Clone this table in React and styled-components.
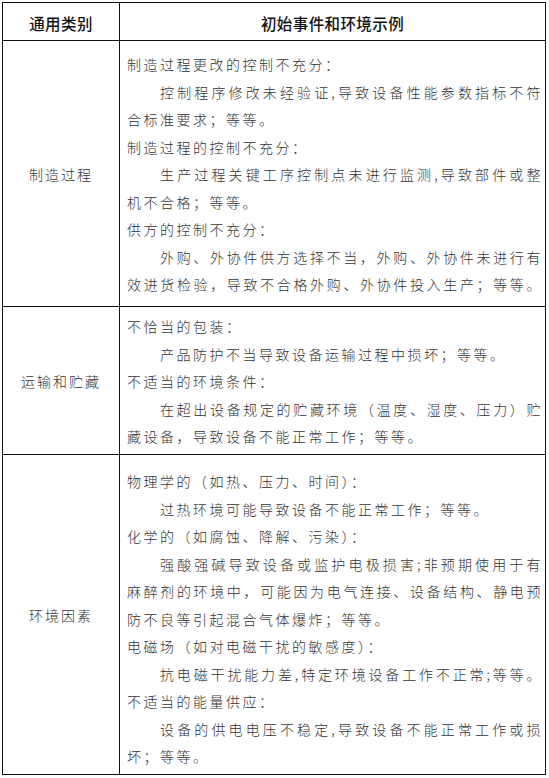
import styled, { createGlobalStyle } from "styled-components"

const GlobalStyle = createGlobalStyle`
  html, body {
    margin: 0;
    padding: 0;
    background: #fff;
  }
  body {
    font-family: "Noto Sans CJK SC", "Noto Sans", sans-serif;
  }
`

const Page = styled.div`
  padding: 2px 0 0 2px;
`

const Table = styled.div`
  display: grid;
  grid-template-columns: 117px 426px;
  width: max-content;
  border-top: 1px solid #111;
  border-left: 1px solid #111;
`

const Cell = styled.div`
  box-sizing: border-box;
  border-right: 1px solid #111;
  border-bottom: 1px solid #111;
  height: ${(p) => p.$h}px;
`

const HeadCell = styled(Cell)`
  display: flex;
  align-items: center;
  justify-content: center;
  padding-top: 3px;
  font-size: 15.5px;
  font-weight: 500;
  letter-spacing: 0.4px;
  color: #111;
`

const LabelCell = styled(Cell)`
  display: flex;
  align-items: center;
  justify-content: center;
  font-size: 14px;
  font-weight: 300;
  letter-spacing: 2px;
  color: #333;
`

const BodyCell = styled(Cell)`
  padding: ${(p) => p.$pt}px 2px 0 7px;
  font-size: 14px;
  font-weight: 300;
  letter-spacing: 2.5px;
  color: #333;
`

const Line = styled.div`
  line-height: 27.5px;
  padding-left: ${(p) => (p.$indent ? 33 : 0)}px;
  text-align: ${(p) => (p.$full ? "justify" : "left")};
  text-align-last: ${(p) => (p.$full ? "justify" : "auto")};
`

const rows = [
  {
    label: "制造过程",
    h: 266,
    pt: 10,
    lines: [
      ["制造过程更改的控制不充分："],
      ["控制程序修改未经验证,导致设备性能参数指标不符", 1, 1],
      ["合标准要求；等等。"],
      ["制造过程的控制不充分："],
      ["生产过程关键工序控制点未进行监测,导致部件或整", 1, 1],
      ["机不合格；等等。"],
      ["供方的控制不充分："],
      ["外购、外协件供方选择不当，外购、外协件未进行有", 1, 1],
      ["效进货检验，导致不合格外购、外协件投入生产；等等。", 0, 1],
    ],
  },
  {
    label: "运输和贮藏",
    h: 148,
    pt: 6,
    lines: [
      ["不恰当的包装："],
      ["产品防护不当导致设备运输过程中损坏；等等。", 1],
      ["不适当的环境条件："],
      ["在超出设备规定的贮藏环境（温度、湿度、压力）贮", 1, 1],
      ["藏设备，导致设备不能正常工作；等等。"],
    ],
  },
  {
    label: "环境因素",
    h: 320,
    pt: 13,
    lines: [
      ["物理学的（如热、压力、时间）："],
      ["过热环境可能导致设备不能正常工作；等等。", 1],
      ["化学的（如腐蚀、降解、污染）："],
      ["强酸强碱导致设备或监护电极损害;非预期使用于有", 1, 1],
      ["麻醉剂的环境中，可能因为电气连接、设备结构、静电预", 0, 1],
      ["防不良等引起混合气体爆炸；等等。"],
      ["电磁场（如对电磁干扰的敏感度）："],
      ["抗电磁干扰能力差,特定环境设备工作不正常;等等。", 1, 1],
      ["不适当的能量供应："],
      ["设备的供电电压不稳定,导致设备不能正常工作或损", 1, 1],
      ["坏；等等。"],
    ],
  },
]

const App = () => {
  return (
    <Page>
      <GlobalStyle />
      <Table>
        <HeadCell $h={38}>通用类别</HeadCell>
        <HeadCell $h={38}>初始事件和环境示例</HeadCell>
        {rows.map((row) => [
          <LabelCell key={row.label + "-l"} $h={row.h}>
            {row.label}
          </LabelCell>,
          <BodyCell key={row.label + "-b"} $h={row.h} $pt={row.pt}>
            {row.lines.map(([text, indent, full], i) => (
              <Line key={i} $indent={!!indent} $full={!!full}>
                {text}
              </Line>
            ))}
          </BodyCell>,
        ])}
      </Table>
    </Page>
  )
}

export default App
